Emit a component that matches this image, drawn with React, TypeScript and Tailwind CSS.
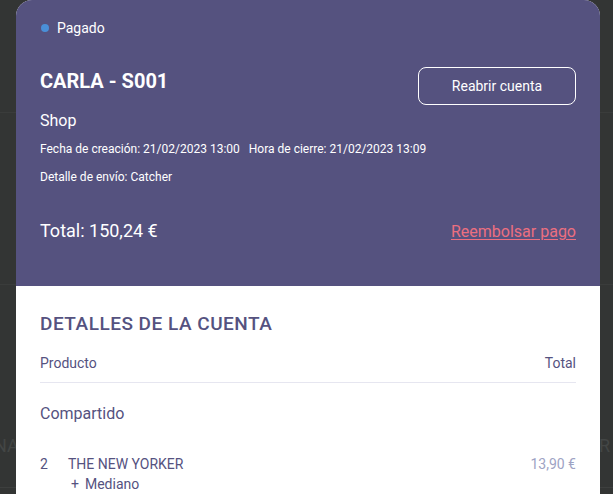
import React from "react";

export default function App() {
  return (
    <div
      className="relative h-[494px] w-[613px] overflow-hidden bg-[#333534]"
      style={{ fontFamily: "Roboto, 'Liberation Sans', sans-serif" }}
    >
      {/* faint background page */}
      <div className="flex h-full flex-col">
        <div className="h-[113px] border-b border-[#3a3c3b]" />
        <div className="h-[172px] border-b border-[#3a3c3b]" />
        <div className="flex h-[202px] items-end justify-between pb-[29px] text-[18px] leading-[24px] text-[#434645]">
          <span className="-ml-[6px]">NA</span>
          <span className="mr-[3px]">R</span>
        </div>
        <div className="flex-1 border-t border-[#3d3f3e]" />
      </div>

      {/* modal */}
      <div className="absolute left-[16px] top-0 w-[584px] overflow-hidden rounded-t-[16px] bg-white">
        <div className="bg-[#55527f] px-[24px] pb-[40px] pt-[18px] text-white">
          <div className="flex h-[20px] items-center">
            <span className="ml-[1px] mr-[8px] h-[8px] w-[8px] rounded-full bg-[#4a8fd8]" />
            <span className="text-[14px] leading-[20px]">Pagado</span>
          </div>
          <div className="mt-[29px] flex items-start justify-between">
            <div className="text-[20px] font-bold leading-[28px]">CARLA - S001</div>
            <button className="flex h-[38px] w-[158px] items-center justify-center rounded-[8px] border border-white text-[14px] text-white">
              Reabrir cuenta
            </button>
          </div>
          <div className="mt-[4px] text-[16px] leading-[24px]">Shop</div>
          <div className="mt-[8px] whitespace-nowrap text-[12px] leading-[16px]">
            <span>Fecha de creación: 21/02/2023 13:00</span>
            <span className="ml-[9px]">Hora de cierre: 21/02/2023 13:09</span>
          </div>
          <div className="mt-[12px] text-[12px] leading-[16px]">Detalle de envío: Catcher</div>
          <div className="mt-[32px] flex items-baseline justify-between">
            <span className="text-[18px] leading-[28px]">Total: 150,24 €</span>
            <a className="text-[16px] leading-[28px] text-[#ec6f80] underline underline-offset-[2px]" href="#">
              Reembolsar pago
            </a>
          </div>
        </div>

        <div className="px-[24px] pt-[24px] text-[#55527f]">
          <div className="text-[19px] font-medium leading-[28px] tracking-[0.5px]">DETALLES DE LA CUENTA</div>
          <div className="mt-[15px] flex justify-between border-b border-[#e6e6f0] pb-[9px] text-[14px] leading-[20px]">
            <span>Producto</span>
            <span>Total</span>
          </div>
          <div className="mt-[19px] text-[16px] leading-[24px]">Compartido</div>
          <div className="mt-[28px] flex justify-between text-[14px] leading-[20px]">
            <div className="flex">
              <span className="w-[28px]">2</span>
              <div className="flex flex-col">
                <span>THE NEW YORKER</span>
                <span className="pl-[3px]">
                  +<span className="ml-[6px]">Mediano</span>
                </span>
              </div>
            </div>
            <span className="text-[#9ea3c4]">13,90 €</span>
          </div>
        </div>
      </div>
    </div>
  );
}
